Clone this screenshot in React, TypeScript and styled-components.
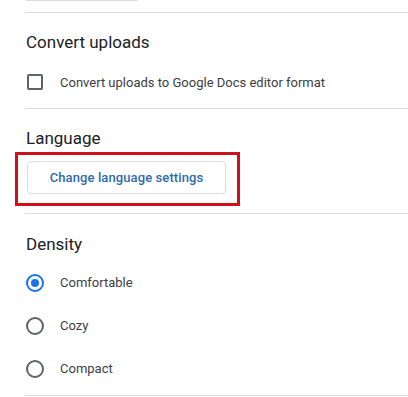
import React, { useState } from 'react'
import styled, { createGlobalStyle } from 'styled-components'

const GlobalStyle = createGlobalStyle`
    body {
        margin: 0;
        background: #ffffff;
        font-family: Roboto, "Liberation Sans", Arial, sans-serif;
    }
`

const Page = styled.div`
    width: 408px;
    height: 397px;
    overflow: hidden;
    padding-left: 25px;
    box-sizing: border-box;
`

const Section = styled.section<{ top: number; bottom: number }>`
    padding-top: ${({ top }) => top}px;
    padding-bottom: ${({ bottom }) => bottom}px;
    border-bottom: 1px solid #dadce0;
`

const CutButton = styled.div`
    width: 112px;
    height: 1px;
    margin-left: 1px;
    background: #dadce0;
`

const Heading = styled.h2`
    margin: 0 0 0 1px;
    font-size: 17px;
    line-height: 24px;
    font-weight: 400;
    color: #202124;
`

const OptionList = styled.div<{ gap: number }>`
    margin-top: ${({ gap }) => gap}px;
    display: flex;
    flex-direction: column;
`

const OptionRow = styled.label<{ height: number }>`
    display: flex;
    align-items: center;
    height: ${({ height }) => height}px;
    font-size: 13px;
    color: #3c4043;
    cursor: pointer;
`

const ControlSlot = styled.span`
    width: 20px;
    display: flex;
    justify-content: center;
    margin-right: 15px;
`

const CheckBox = styled.span`
    width: 16px;
    height: 16px;
    box-sizing: border-box;
    border: 2px solid #5f6368;
    border-radius: 2px;
`

const Radio = styled.span<{ checked: boolean }>`
    width: 18px;
    height: 18px;
    box-sizing: border-box;
    border: 2px solid ${({ checked }) => (checked ? '#1a73e8' : '#5f6368')};
    border-radius: 50%;
    display: flex;
    align-items: center;
    justify-content: center;

    &::after {
        content: '';
        width: 8px;
        height: 8px;
        border-radius: 50%;
        background: #1a73e8;
        display: ${({ checked }) => (checked ? 'block' : 'none')};
    }
`

const Highlight = styled.div`
    margin: 2px 0 7px -10px;
    width: 225px;
    height: 54px;
    box-sizing: border-box;
    border: 3px solid #d0101c;
    padding: 6px 0 0 9px;
`

const LanguageButton = styled.button`
    width: 199px;
    height: 33px;
    box-sizing: border-box;
    border: 1px solid #dadce0;
    border-radius: 4px;
    background: #ffffff;
    font-family: Roboto, "Liberation Sans", Arial, sans-serif;
    font-size: 13px;
    font-weight: 500;
    color: #2f6aae;
    letter-spacing: 0.1px;
    cursor: pointer;
`

const densities = ['Comfortable', 'Cozy', 'Compact']

const App: React.FunctionComponent = () => {
    const [density, setDensity] = useState('Comfortable')
    return (
        <>
            <GlobalStyle />
            <Page>
                <Section top={0} bottom={11}>
                    <CutButton />
                </Section>

                <Section top={17} bottom={14}>
                    <Heading>Convert uploads</Heading>
                    <OptionList gap={16}>
                        <OptionRow height={24}>
                            <ControlSlot>
                                <CheckBox />
                            </ControlSlot>
                            Convert uploads to Google Docs editor format
                        </OptionRow>
                    </OptionList>
                </Section>

                <Section top={17} bottom={0}>
                    <Heading>Language</Heading>
                    <Highlight>
                        <LanguageButton>Change language settings</LanguageButton>
                    </Highlight>
                </Section>

                <Section top={18} bottom={5}>
                    <Heading>Density</Heading>
                    <OptionList gap={5}>
                        {densities.map((item) => (
                            <OptionRow key={item} height={43} onClick={() => setDensity(item)}>
                                <ControlSlot>
                                    <Radio checked={density === item} />
                                </ControlSlot>
                                {item}
                            </OptionRow>
                        ))}
                    </OptionList>
                </Section>
            </Page>
        </>
    )
}

export default App
